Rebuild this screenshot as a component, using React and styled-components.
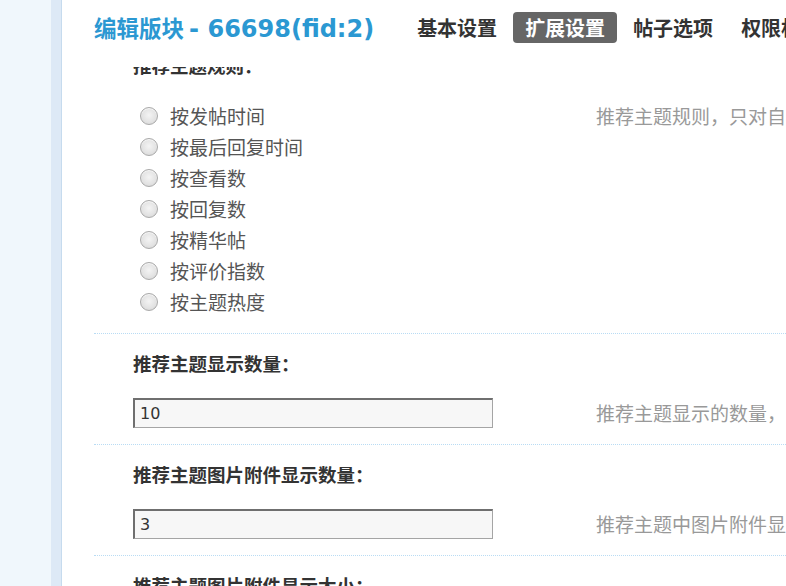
import React from "react";
import styled, { createGlobalStyle } from "styled-components";

const GlobalStyle = createGlobalStyle`
  body {
    margin: 0;
    background: #fff;
    font-family: "Noto Sans CJK SC", "Noto Sans", sans-serif;
  }
`;

const sortRules = [
  "按发帖时间",
  "按最后回复时间",
  "按查看数",
  "按回复数",
  "按精华帖",
  "按评价指数",
  "按主题热度",
];

const tabs = ["基本设置", "扩展设置", "帖子选项", "权限相关"];

const App = () => {
  return (
    <>
      <GlobalStyle />
      <Page>
        <Sidebar />
        <Rail />
        <Main>
          <Header>
            <Title>
              编辑版块 <Latin>- 66698(fid:2)</Latin>
            </Title>
            <Tabs>
              {tabs.map((t) => (
                <Tab key={t} $active={t === "扩展设置"}>
                  {t}
                </Tab>
              ))}
            </Tabs>
          </Header>
          <Scroller>
            <Sheet>
              <Section>
                <FieldTitle>推荐主题规则：</FieldTitle>
                <Body>
                  <RadioList>
                    {sortRules.map((r) => (
                      <RadioRow key={r}>
                        <Radio type="radio" name="rule" />
                        {r}
                      </RadioRow>
                    ))}
                  </RadioList>
                  <Desc $lh={31}>推荐主题规则，只对自动推荐主题有效</Desc>
                </Body>
              </Section>
              <Section>
                <FieldTitle>推荐主题显示数量：</FieldTitle>
                <Body>
                  <TextInput defaultValue="10" />
                  <Desc $lh={30}>推荐主题显示的数量，默认为 0 表示不显示</Desc>
                </Body>
              </Section>
              <Section>
                <FieldTitle>推荐主题图片附件显示数量：</FieldTitle>
                <Body>
                  <TextInput defaultValue="3" />
                  <Desc $lh={30}>推荐主题中图片附件显示的数量</Desc>
                </Body>
              </Section>
              <Section>
                <FieldTitle>推荐主题图片附件显示大小：</FieldTitle>
              </Section>
            </Sheet>
          </Scroller>
        </Main>
      </Page>
    </>
  );
};

export default App;

const Page = styled.div`
  display: flex;
  width: 786px;
  height: 586px;
  overflow: hidden;
  background: #fff;
`;

const Sidebar = styled.div`
  width: 51px;
  flex: none;
  background: #f0f7fc;
`;

const Rail = styled.div`
  width: 10px;
  flex: none;
  background: #dde9f6;
  border-right: 1px solid #c6dbee;
`;

const Main = styled.div`
  flex: 1;
  min-width: 0;
  display: flex;
  flex-direction: column;
`;

const Header = styled.div`
  height: 67px;
  flex: none;
  box-sizing: border-box;
  padding: 0 0 12px 32px;
  display: flex;
  align-items: center;
  white-space: nowrap;
  background: #fff;
`;

const Title = styled.h1`
  margin: 0;
  font-size: 22.5px;
  font-weight: bold;
  color: #2b98d2;
  line-height: 30px;
`;

const Latin = styled.span`
  font-family: "DejaVu Sans", Verdana, sans-serif;
  font-size: 24px;
`;

const Tabs = styled.div`
  display: flex;
  margin-left: 31px;
  gap: 4px;
`;

const Tab = styled.span`
  height: 31px;
  line-height: 31px;
  padding: 0 12px;
  border-radius: 4px;
  font-size: 20px;
  font-weight: bold;
  color: ${(p) => (p.$active ? "#fff" : "#333")};
  background: ${(p) => (p.$active ? "#666" : "transparent")};
`;

const Scroller = styled.div`
  flex: 1;
  overflow: hidden;
  padding-left: 32px;
`;

const Sheet = styled.div`
  margin-top: -32px;
`;

const Section = styled.div`
  border-top: 1px dotted #b9dcf4;
  padding: 14px 0 16px;
`;

const FieldTitle = styled.div`
  height: 30px;
  line-height: 30px;
  padding-left: 39px;
  font-size: 18.5px;
  font-weight: bold;
  color: #333;
  white-space: nowrap;
`;

const Body = styled.div`
  display: grid;
  grid-template-columns: 463px auto;
  align-items: start;
  margin-top: 20px;
  padding-left: 39px;
`;

const RadioList = styled.div`
  display: flex;
  flex-direction: column;
  padding-left: 7px;
`;

const RadioRow = styled.label`
  display: flex;
  align-items: center;
  gap: 12px;
  height: 31px;
  font-size: 19px;
  color: #555;
  white-space: nowrap;
`;

const Radio = styled.input`
  appearance: none;
  margin: 0;
  width: 18px;
  height: 18px;
  border-radius: 50%;
  border: 1px solid #a9a9a9;
  background: radial-gradient(circle at 50% 45%, #f4f4f4 0%, #e2e2e2 60%, #cfcfcf 100%);
  box-shadow: inset 0 1px 1px rgba(255, 255, 255, 0.8);
`;

const TextInput = styled.input`
  width: 360px;
  height: 30px;
  box-sizing: border-box;
  margin: 0;
  padding: 0 5px;
  border: 1px solid #a5a5a5;
  border-top: 2px solid #6f6f6f;
  border-left: 2px solid #6f6f6f;
  background: #f7f7f7;
  font-family: "DejaVu Sans", Verdana, sans-serif;
  font-size: 16px;
  color: #333;
  outline: none;
`;

const Desc = styled.div`
  line-height: ${(p) => p.$lh}px;
  font-size: 19px;
  color: #999;
  white-space: nowrap;
`;
